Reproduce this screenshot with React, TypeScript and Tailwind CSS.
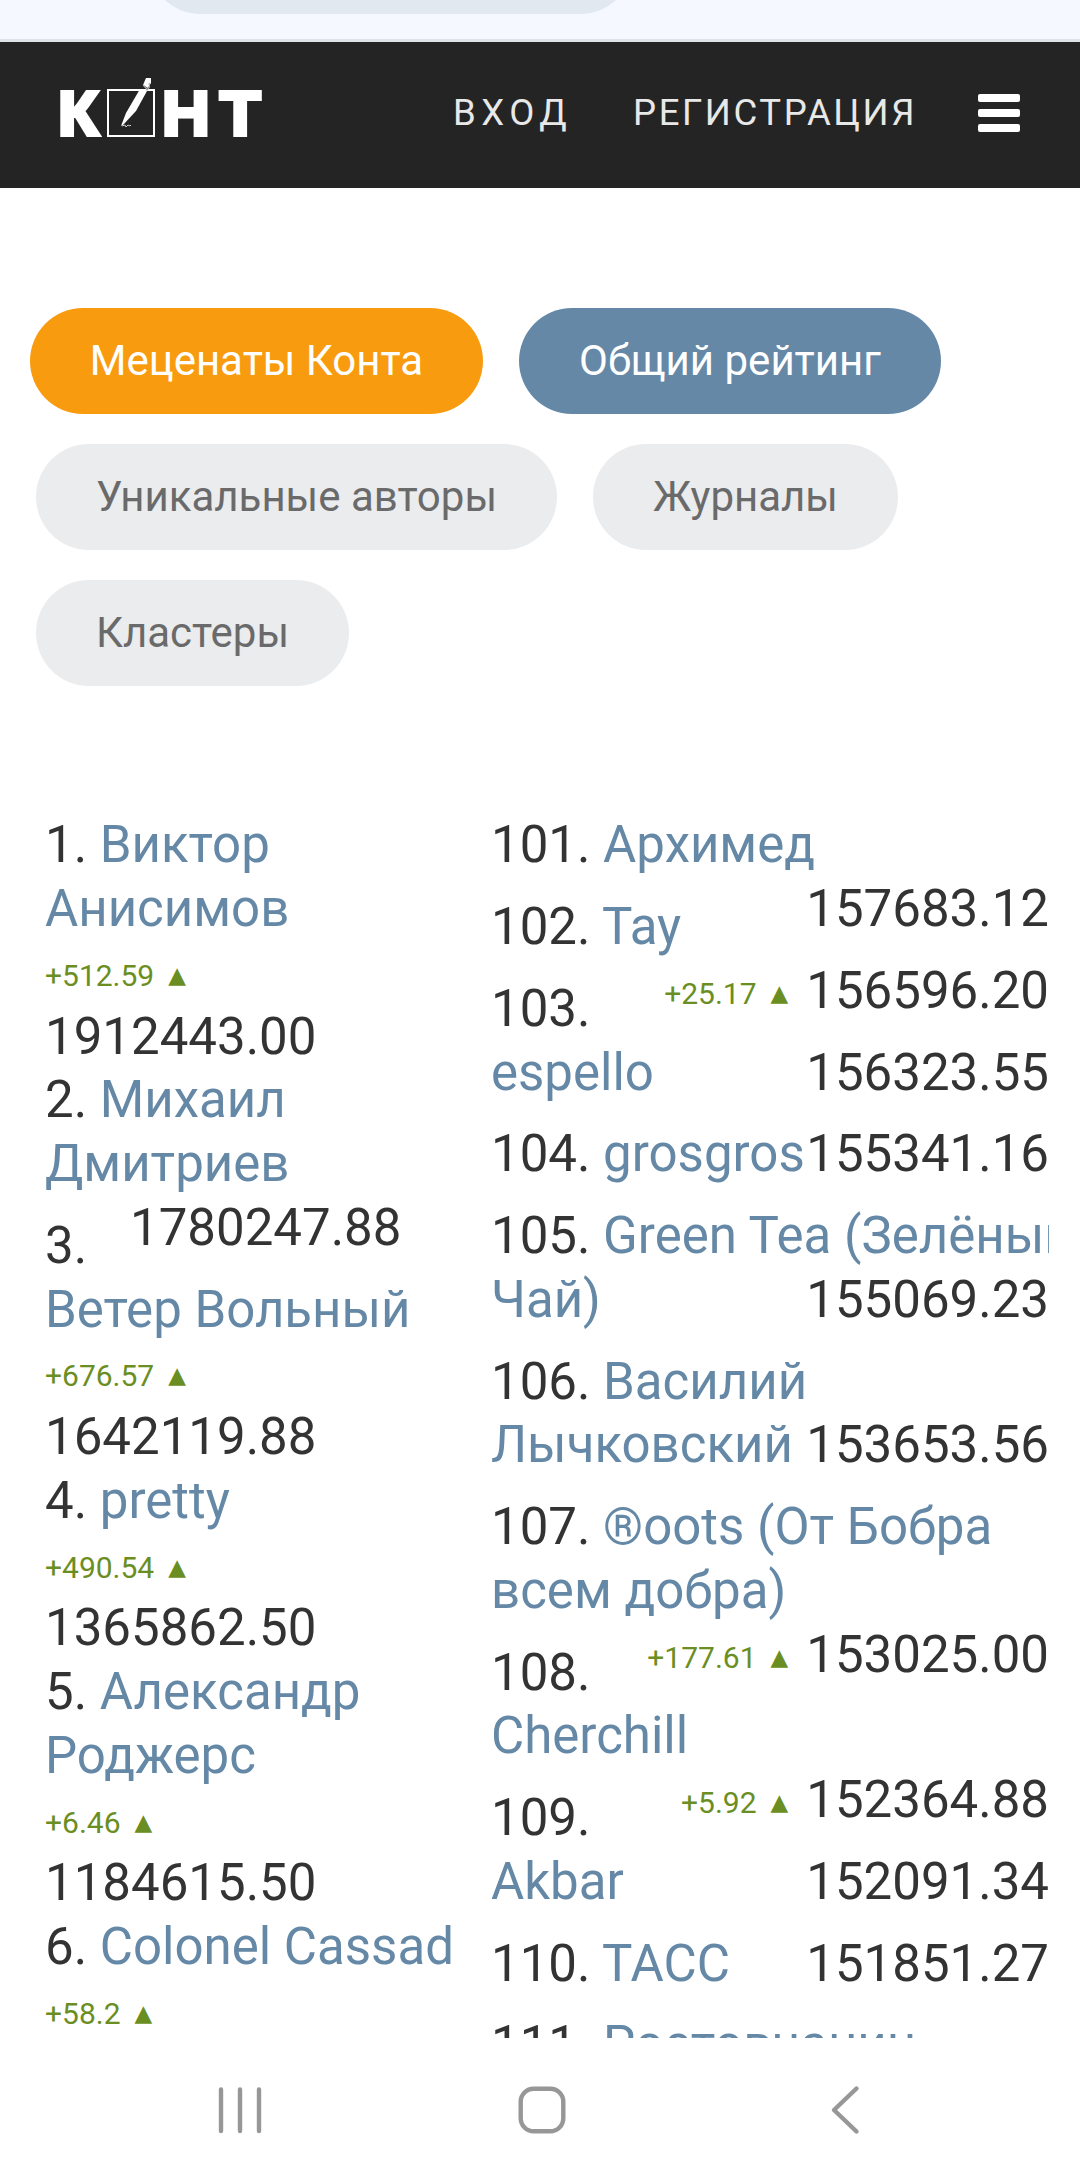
import clsx from "clsx";

type Line = {
  rank?: string;
  name?: string;
  delta?: string;
  score?: string;
  // text drops below a floated score from the previous entry
  shifted?: boolean;
  // last line of an entry
  last?: boolean;
};

const tabs = [
  [
    { label: "Меценаты Конта", className: "w-[453px] bg-[#f99b0f] text-white" },
    { label: "Общий рейтинг", className: "w-[422px] bg-[#6488a6] text-white" },
  ],
  [
    { label: "Уникальные авторы", className: "ml-[6px] w-[521px] bg-[#ebecee] text-[#6a6a6a]" },
    { label: "Журналы", className: "w-[305px] bg-[#ebecee] text-[#6a6a6a]" },
  ],
  [{ label: "Кластеры", className: "ml-[6px] w-[313px] bg-[#ebecee] text-[#6a6a6a]" }],
];

const topLines: Line[] = [
  { rank: "1.", name: "Виктор" },
  { name: "Анисимов" },
  { delta: "+512.59" },
  { score: "1912443.00" },
  { rank: "2.", name: "Михаил" },
  { name: "Дмитриев" },
  { rank: "3.", score: "1780247.88", shifted: true },
  { name: "Ветер Вольный" },
  { delta: "+676.57" },
  { score: "1642119.88" },
  { rank: "4.", name: "pretty" },
  { delta: "+490.54" },
  { score: "1365862.50" },
  { rank: "5.", name: "Александр" },
  { name: "Роджерс" },
  { delta: "+6.46" },
  { score: "1184615.50" },
  { rank: "6.", name: "Colonel Cassad" },
  { delta: "+58.2" },
];

const nextLines: Line[] = [
  { rank: "101.", name: "Архимед" },
  { rank: "102.", name: "Тау", score: "157683.12", shifted: true },
  { rank: "103.", delta: "+25.17", score: "156596.20", shifted: true },
  { name: "espello", score: "156323.55", last: true },
  { rank: "104.", name: "grosgros", score: "155341.16", last: true },
  { rank: "105.", name: "Green Tea (Зелёный" },
  { name: "Чай)", score: "155069.23", last: true },
  { rank: "106.", name: "Василий" },
  { name: "Лычковский", score: "153653.56", last: true },
  { rank: "107.", name: "®oots (От Бобра" },
  { name: "всем добра)" },
  { rank: "108.", delta: "+177.61", score: "153025.00", shifted: true },
  { name: "Cherchill" },
  { rank: "109.", delta: "+5.92", score: "152364.88", shifted: true },
  { name: "Akbar", score: "152091.34", last: true },
  { rank: "110.", name: "ТАСС", score: "151851.27", last: true },
  { rank: "111.", name: "Ростовчанин" },
];

function Delta({ value }: { value: string }) {
  return (
    <span className="pt-[3px] text-[30px] text-[#6b8e23]">
      {value}
      <span className="ml-[14px] inline-block align-[3px] font-['DejaVu_Sans',sans-serif] text-[23px] leading-none">▲</span>
    </span>
  );
}

function Name({ rank, name }: Line) {
  return (
    <span>
      {rank && <span>{rank} </span>}
      {name && <a className="text-[#6488a6]">{name}</a>}
    </span>
  );
}

function TopRow({ line }: { line: Line }) {
  if (line.shifted) {
    return (
      <li className="flex h-[81.75px]">
        <span className="w-[85px] pt-[18px]">{line.rank}</span>
        <span>{line.score}</span>
      </li>
    );
  }

  return (
    <li className="flex h-[63.75px]">
      {line.name && <Name {...line} />}
      {line.delta && <Delta value={line.delta} />}
      {line.score && <span>{line.score}</span>}
    </li>
  );
}

function NextRow({ line }: { line: Line }) {
  return (
    <li className={clsx("flex justify-between", line.shifted || line.last ? "h-[81.75px]" : "h-[63.75px]")}>
      <div className={clsx(line.shifted && "pt-[18px]")}>
        <Name {...line} />
      </div>
      {line.score && (
        <div className="flex gap-[18px]">
          {line.delta && <Delta value={line.delta} />}
          <span>{line.score}</span>
        </div>
      )}
    </li>
  );
}

function Logo() {
  return (
    <div className="flex h-[62px] items-start font-['Liberation_Sans',sans-serif] text-[63px] leading-[62px] font-bold text-white [-webkit-text-stroke:4px_#fff]">
      <span className="w-[48px] origin-left scale-x-105 pt-[6px]">К</span>
      <svg className="shrink-0" width="56" height="62" viewBox="0 0 56 62" fill="none">
        <rect x="2" y="14" width="46" height="46" stroke="#fff" strokeWidth="2" />
        <path d="M15 50 L20 37 L34 13 L41 15 L30 35 L17 49 Z" fill="#fff" />
        <path d="M37 9 L40 2 L45 2 L45 7 L42 12 Z" fill="#fff" />
        <path d="M37 9 L42 14 M40 14 Q45 12 43 7" stroke="#aaa" strokeWidth="1.2" />
        <path d="M16 50 L19 49 L20 51 L22 49 L24 50 L25 49" stroke="#ccc" strokeWidth="1" />
      </svg>
      <span className="w-[58px] origin-left scale-x-105 pt-[6px]">Н</span>
      <span className="origin-left scale-x-105 pt-[6px]">Т</span>
    </div>
  );
}

export default function App() {
  return (
    <div className="flex h-[2182px] w-[1080px] flex-col overflow-hidden bg-white font-[Roboto,sans-serif] text-[#333]">
      {/* Browser toolbar */}
      <div className="h-[42px] shrink-0 overflow-hidden border-b-[3px] border-[#dde3e6] bg-[#f5f9ff]">
        <div className="-mt-[94px] ml-[147px] h-[108px] w-[487px] rounded-full bg-[#e1e8f0]" />
      </div>

      <header className="flex h-[146px] shrink-0 bg-[#242424] pl-[58px]">
        <div className="w-[395px] pt-[34px]">
          <Logo />
        </div>
        <nav className="flex h-[142px] items-center text-[36.5px] text-[#e8e8e8]">
          <a className="w-[180px] tracking-[5.5px]">ВХОД</a>
          <a className="w-[345px] tracking-[2.6px]">РЕГИСТРАЦИЯ</a>
          <div className="flex w-[42px] flex-col gap-[7px]">
            <i className="h-2 rounded-xs bg-white" />
            <i className="h-2 rounded-xs bg-white" />
            <i className="h-2 rounded-xs bg-white" />
          </div>
        </nav>
      </header>

      <main className="flex h-[1850px] shrink-0 flex-col overflow-hidden">
        <div className="flex flex-col gap-[30px] pt-[120px] pl-[30px]">
          {tabs.map((row, index) => (
            <div key={index} className="flex gap-9">
              {row.map((tab) => (
                <a
                  key={tab.label}
                  className={clsx(
                    "flex h-[106px] items-center justify-center rounded-full pb-[2px] text-[42px] whitespace-nowrap",
                    tab.className,
                  )}
                >
                  {tab.label}
                </a>
              ))}
            </div>
          ))}
        </div>

        <div className="mt-[127.4px] flex pl-[45px] text-[51px] leading-[63.75px] whitespace-nowrap">
          <ul className="w-[446px]">
            {topLines.map((line, index) => (
              <TopRow key={index} line={line} />
            ))}
          </ul>
          <ul className="w-[558px] overflow-hidden">
            {nextLines.map((line, index) => (
              <NextRow key={index} line={line} />
            ))}
          </ul>
        </div>
      </main>

      {/* System navigation */}
      <footer className="flex grow items-center justify-center text-[#979797]">
        <svg width="1080" height="144" viewBox="0 0 1080 144" fill="none" stroke="currentColor" strokeWidth="4.4" strokeLinecap="round" strokeLinejoin="round">
          <path d="M221 51.5V93M240 51.5V93M259 51.5V93" />
          <rect x="520.7" y="50.7" width="42.6" height="42.6" rx="13" />
          <path d="M856.5 50.5L834 72L856.5 93.5" />
        </svg>
      </footer>
    </div>
  );
}
